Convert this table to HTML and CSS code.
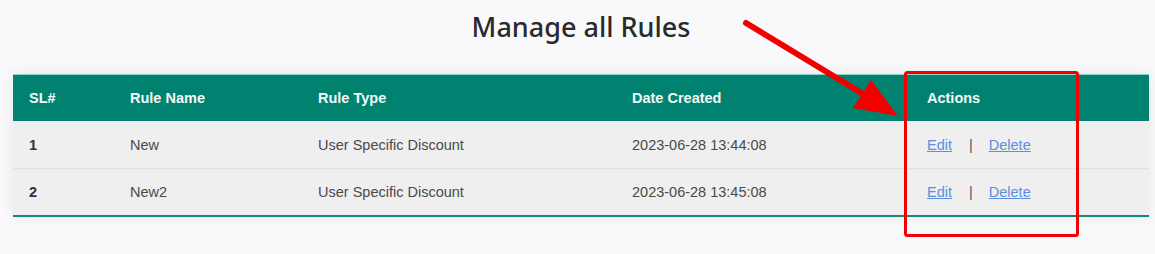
FILE: index.html
```html
<!DOCTYPE html>
<html>
<head>
  <meta charset="UTF-8">
  <title>Manage all Rules</title>
  <link rel="stylesheet" href="styles.css">
</head>
<body>
  <div class="page">
    <h2 class="page-title">Manage all Rules</h2>
    <table class="rules-table">
      <colgroup>
        <col class="col-sl">
        <col class="col-name">
        <col class="col-type">
        <col class="col-date">
        <col class="col-actions">
      </colgroup>
      <thead>
        <tr>
          <th>SL#</th>
          <th>Rule Name</th>
          <th>Rule Type</th>
          <th>Date Created</th>
          <th>Actions</th>
        </tr>
      </thead>
      <tbody>
        <tr>
          <td class="sl">1</td>
          <td>New</td>
          <td>User Specific Discount</td>
          <td>2023-06-28 13:44:08</td>
          <td><a href="#">Edit</a><span class="sep">|</span><a href="#">Delete</a></td>
        </tr>
        <tr>
          <td class="sl">2</td>
          <td>New2</td>
          <td>User Specific Discount</td>
          <td>2023-06-28 13:45:08</td>
          <td><a href="#">Edit</a><span class="sep">|</span><a href="#">Delete</a></td>
        </tr>
      </tbody>
    </table>

    <!-- callout pointing at the actions column -->
    <svg class="callout" width="1155" height="254" viewBox="0 0 1155 254">
      <line x1="746" y1="23" x2="868" y2="97" stroke="#f20000" stroke-width="6" stroke-linecap="round"/>
      <polygon points="853,108 871,80 898,116" fill="#f20000"/>
      <rect x="905.5" y="72.5" width="172" height="163" rx="2" fill="none" stroke="#f20000" stroke-width="3"/>
    </svg>
  </div>
</body>
</html>
```

FILE: styles.css
```css
body {
  margin: 0;
  background-color: #f9f9fb;
  font-family: "Liberation Sans", Arial, sans-serif;
}

.page {
  position: relative;
  width: 1155px;
  height: 254px;
  padding-top: 10px;
  box-sizing: border-box;
}

.page-title {
  margin: 0 0 0 13px;
  width: 1136px;
  text-align: center;
  font-family: "Noto Sans", sans-serif;
  font-size: 27px;
  font-weight: 500;
  line-height: 34px;
  color: #2a2a2a;
}

.rules-table {
  margin: 30px 0 0 13px;
  width: 1136px;
  border-collapse: collapse;
  table-layout: fixed;
  font-size: 14.5px;
  box-shadow: 0 0 12px rgba(0, 0, 0, 0.08);
  border-bottom: 2px solid #16877a;
}

.col-sl { width: 101px; }
.col-name { width: 188px; }
.col-type { width: 314px; }
.col-date { width: 295px; }
.col-actions { width: 238px; }

.rules-table th {
  background-color: #018271;
  color: #f2fbf8;
  text-align: left;
  font-weight: bold;
  height: 46px;
  padding: 0 16px;
  border-top: 1px solid #8fd3c8;
}

.rules-table td {
  background-color: #efeff0;
  color: #4a4a4a;
  height: 47px;
  padding: 0 16px;
  border-bottom: 1px solid #e0e0e2;
}

.rules-table tbody tr:last-child td {
  border-bottom: none;
  height: 46px;
}

.rules-table td.sl {
  font-weight: bold;
  color: #333;
}

.rules-table a {
  color: #5a8ee0;
  text-decoration: underline;
}

.sep {
  color: #555;
  margin: 0 16px 0 17px;
}

.callout {
  position: absolute;
  top: 0;
  left: 0;
  pointer-events: none;
}
```
